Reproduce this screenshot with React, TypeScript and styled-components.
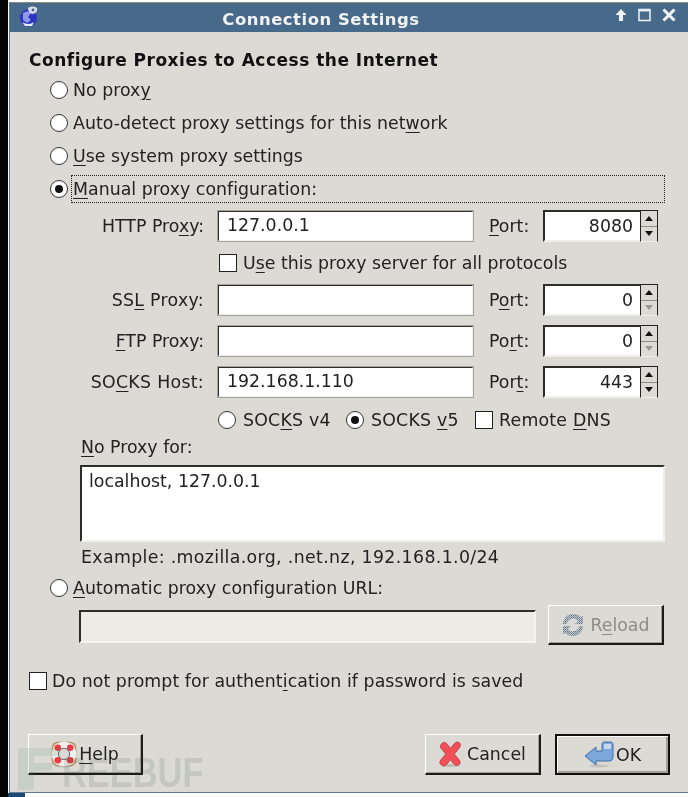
import React from "react";
import styled, { createGlobalStyle } from "styled-components";

const Global = createGlobalStyle`
  html, body { margin: 0; padding: 0; background: #ffffff; }
  * { box-sizing: border-box; }
`;

const Desktop = styled.div`
  position: relative;
  width: 688px;
  height: 797px;
  overflow: hidden;
  background: #fff;
  padding: 2px 0 4px 9px;
  font-family: "DejaVu Sans", sans-serif;
  font-size: 17.35px;
  color: #222;
  filter: blur(0.35px);
  &::before {
    content: "";
    position: absolute;
    left: 0; top: 0; bottom: 0;
    width: 8px;
    background: #050505;
  }
  &::after {
    content: "";
    position: absolute;
    left: 8px; bottom: 0;
    width: 17px; height: 4px;
    background: #1d4a70;
  }
`;
const Dialog = styled.div`
  height: 100%;
  display: flex;
  flex-direction: column;
  background: #dbdad5;
  border-top: 1px solid #8d8a7e;
  border-left: 1px solid #5f7d98;
  border-bottom: 1px solid #5f7d98;
`;
const TitleBar = styled.div`
  position: relative;
  flex: none;
  height: 29px;
  background: #47698a;
  display: flex;
  align-items: center;
  justify-content: center;
  color: #f2f2f2;
  font-weight: 700;
  font-size: 16.4px;
  letter-spacing: 0.55px;
  padding: 3px 56px 0 0;
`;
const AppIcon = styled.svg`
  position: absolute;
  left: 9px;
  top: 2px;
`;
const WinControls = styled.div`
  position: absolute;
  right: 12px;
  top: 5px;
  display: flex;
  align-items: center;
  gap: 11px;
`;
const Content = styled.div`
  flex: 1;
  position: relative;
  padding: 12px 0 0 19px;
`;
const Heading = styled.div`
  height: 29px;
  line-height: 33px;
  font-weight: 700;
  font-size: 17px;
  letter-spacing: 0.5px;
  color: #111;
`;
const OptionRow = styled.div<{ $h?: number }>`
  height: ${(p) => p.$h ?? 33}px;
  display: flex;
  align-items: center;
  padding-left: 21px;
  gap: 5px;
  letter-spacing: 0.03px;
`;
const Radio = styled.span<{ $on?: boolean }>`
  flex: none;
  width: 18px;
  height: 18px;
  border-radius: 50%;
  background: #fff;
  border: 1.5px solid #333;
  display: flex;
  align-items: center;
  justify-content: center;
  &::after {
    content: "";
    width: 8px;
    height: 8px;
    border-radius: 50%;
    background: ${(p) => (p.$on ? "#111" : "transparent")};
  }
`;
const Check = styled.span`
  flex: none;
  width: 18px;
  height: 18px;
  background: #fff;
  border: 1.5px solid #222;
`;
const Focused = styled.span`
  flex: none;
  width: 594px;
  height: 28px;
  margin-left: -2px;
  padding-left: 1px;
  line-height: 26px;
  border: 1px dotted #222;
`;
const M = styled.span`
  text-decoration: underline;
  text-underline-offset: 3px;
  text-decoration-thickness: 1px;
`;
const ProxyRow = styled.div<{ $mt: number }>`
  display: grid;
  grid-template-columns: 188px 257px 69px 115px;
  height: 32px;
  margin-top: ${(p) => p.$mt}px;
  align-items: center;
`;
const FieldLabel = styled.label<{ $wide?: boolean }>`
  text-align: right;
  padding-right: 13px;
  letter-spacing: ${(p) => (p.$wide ? "0.3px" : "0")};
`;
const PortLabel = styled.label`
  padding-left: 15px;
`;
const TextField = styled.div`
  height: 32px;
  background: #fff;
  border-style: solid;
  border-width: 2px;
  border-color: #2d2c28 #efeeea #efeeea #2d2c28;
  outline: 1px solid #a5a39b;
  outline-offset: -1px;
  padding-left: 8px;
  line-height: 27px;
`;
const Spin = styled.div`
  position: relative;
  height: 32px;
  background: #fff;
  border-style: solid;
  border-width: 2px;
  border-color: #2d2c28 #efeeea #efeeea #2d2c28;
  text-align: right;
  padding-right: 23px;
  line-height: 28px;
`;
const SpinButtons = styled.div`
  position: absolute;
  top: -2px;
  right: -2px;
  bottom: -2px;
  width: 18px;
  display: flex;
  flex-direction: column;
  background: #dbdad5;
  border: 1px solid #222;
  border-bottom-color: #efeeea;
`;
const SpinCell = styled.div`
  flex: 1;
  display: flex;
  align-items: center;
  justify-content: center;
  & + & { border-top: 1px solid #8f8c84; }
`;
const Tri = styled.span<{ $down?: boolean; $off?: boolean }>`
  width: 0;
  height: 0;
  border-left: 4px solid transparent;
  border-right: 4px solid transparent;
  ${(p) => (p.$down ? "border-top" : "border-bottom")}: 5px solid ${(p) => (p.$off ? "#9a9890" : "#111")};
`;
const AllProtocols = styled.div`
  height: 42px;
  padding-left: 190px;
  display: flex;
  align-items: center;
  gap: 6px;
`;
const SocksRow = styled.div`
  height: 39px;
  padding: 4px 0 0 189px;
  display: flex;
  align-items: center;
  letter-spacing: 0.22px;
`;
const SocksItem = styled.span<{ $w: number; $gap: number }>`
  width: ${(p) => p.$w}px;
  display: flex;
  align-items: center;
  gap: ${(p) => p.$gap}px;
`;
const NoProxyLabel = styled.div`
  height: 20px;
  line-height: 20px;
  margin: 0 0 8px 52px;
`;
const TextArea = styled.div`
  width: 585px;
  height: 77px;
  margin-left: 51px;
  background: #fff;
  border-style: solid;
  border-width: 2px;
  border-color: #2d2c28 #efeeea #efeeea #2d2c28;
  padding: 4px 7px;
`;
const Example = styled.div`
  height: 30px;
  line-height: 30px;
  margin-left: 52px;
  letter-spacing: 0.35px;
`;
const UrlRow = styled.div`
  display: flex;
  align-items: flex-start;
  height: 40px;
  margin: 2px 0 0 50px;
`;
const UrlField = styled.div`
  width: 457px;
  height: 33px;
  margin: 5px 12px 0 0;
  background: #edebe6;
  border-style: solid;
  border-width: 2px;
  border-color: #2d2c28 #f4f3ef #f4f3ef #2d2c28;
`;
const Btn = styled.div<{ $w: number; $focus?: boolean; $off?: boolean; $gap?: number }>`
  flex: none;
  width: ${(p) => p.$w}px;
  height: ${(p) => (p.$off ? 40 : 41)}px;
  display: flex;
  align-items: center;
  justify-content: center;
  gap: ${(p) => p.$gap ?? 2}px;
  color: ${(p) => (p.$off ? "#8d8c87" : "#222")};
  background: #dbdad5;
  border-style: solid;
  border-width: ${(p) => (p.$focus ? "2px" : "1px 2px 2px 1px")};
  border-color: ${(p) => (p.$focus ? "#111" : "#fff #1a1a18 #1a1a18 #fff")};
  box-shadow: ${(p) =>
    p.$focus
      ? "inset 1px 1px 0 #fff, inset -2px -2px 0 #a3a095"
      : "inset -1px -1px 0 #a3a095"};
`;
const AuthRow = styled.div`
  height: 30px;
  margin-top: 21px;
  display: flex;
  align-items: center;
  gap: 5px;
  letter-spacing: 0.06px;
`;
const Footer = styled.div`
  display: flex;
  margin: 38px 0 0 -1px;
  width: 642px;
  gap: 14px;
`;
const Spacer = styled.div`
  flex: 1;
`;
const Watermark = styled.div`
  position: absolute;
  left: 18px;
  top: 748px;
  display: flex;
  align-items: flex-end;
  pointer-events: none;
  opacity: 0.13;
`;
const WatermarkText = styled.span`
  font-family: "Liberation Sans", sans-serif;
  font-weight: 700;
  font-size: 43px;
  line-height: 36px;
  color: #33473a;
  margin-left: 2px;
  transform: scaleX(0.8);
  transform-origin: left bottom;
`;

const LogoIcon = () => (
  <AppIcon width="20" height="24" viewBox="0 0 20 24">
    <circle cx="9.5" cy="13" r="8.5" fill="#2c34c8" />
    <path d="M4 8c3-2 6-2 8 0l-3 4 3 3-4 3-4-3z" fill="#8f9ae8" />
    <path d="M3 17c3 2 8 3 12 0l-2 4H6z" fill="#e8e8f8" />
    <path d="M9 3c2-2 7-2 9 0 1 3-1 5-4 6-3 0-5-3-5-6z" fill="#d6d9e6" />
    <circle cx="14" cy="5" r="1.4" fill="#47698a" />
  </AppIcon>
);
const UpIcon = () => (
  <svg width="12" height="14" viewBox="0 0 12 14">
    <path d="M6 1 11.5 7H8v6H4V7H.5z" fill="#f4f4f4" />
  </svg>
);
const MaxIcon = () => (
  <svg width="13" height="14" viewBox="0 0 13 14">
    <rect x="1" y="1.5" width="11" height="11" fill="none" stroke="#e8ecf0" strokeWidth="1.6" />
    <rect x="1" y="1" width="11" height="2.5" fill="#e8ecf0" />
  </svg>
);
const CloseIcon = () => (
  <svg width="14" height="14" viewBox="0 0 14 14">
    <path d="M1.5 1.5 12.5 12.5M12.5 1.5 1.5 12.5" stroke="#f4f4f4" strokeWidth="3" />
  </svg>
);
const ReloadIcon = () => (
  <svg width="24" height="24" viewBox="0 0 24 24">
    <defs>
      <pattern id="dots" width="2" height="2" patternUnits="userSpaceOnUse">
        <rect width="2" height="2" fill="#c9cacb" />
        <rect width="1" height="1" fill="#5d7488" />
        <rect x="1" y="1" width="1" height="1" fill="#7d8f9f" />
      </pattern>
    </defs>
    <path d="M2 11C2 5 7 1 12 1c3 0 6 1 8 3l2-1v8h-8l3-3c-2-2-4-3-6-2-3 0-5 3-5 5zM22 13c0 6-5 10-10 10-3 0-6-1-8-3l-2 1v-8h8l-3 3c2 2 4 3 6 2 3 0 5-3 5-5z" fill="url(#dots)" />
  </svg>
);
const HelpIcon = () => (
  <svg width="26" height="27" viewBox="0 0 26 27">
    <ellipse cx="13" cy="25" rx="9" ry="1.5" fill="#bdbbb4" />
    <rect x="1.5" y="1.5" width="23" height="23" rx="5" fill="none" stroke="#b2945c" strokeWidth="1.6" />
    <circle cx="13" cy="13" r="9" fill="none" stroke="#eeeeee" strokeWidth="6.5" />
    <g fill="#ee3b42">
      <circle cx="6.8" cy="6.8" r="3.3" />
      <circle cx="19.2" cy="6.8" r="3.3" />
      <circle cx="6.8" cy="19.2" r="3.3" />
      <circle cx="19.2" cy="19.2" r="3.3" />
    </g>
    <circle cx="13" cy="13" r="5.6" fill="#dbdad5" stroke="#666" strokeWidth="1" />
  </svg>
);
const CancelIcon = () => (
  <svg width="23" height="27" viewBox="0 0 24 27">
    <ellipse cx="12" cy="25" rx="10" ry="1.5" fill="#bdbbb4" />
    <path d="M3 2c2-2 4-1 5 0l4 5 4-5c2-2 4-2 6 0 1 2 0 3-1 5l-5 6 5 6c2 3 1 4 0 5-2 2-4 1-5 0l-4-5-4 5c-2 2-4 2-6 0-2-2-1-3 0-5l5-6-5-6C1 5 1 4 3 2z" fill="#ef5058" stroke="#c43a42" strokeWidth="0.8" />
  </svg>
);
const OkIcon = () => (
  <svg width="30" height="27" viewBox="0 0 30 27">
    <ellipse cx="15" cy="25" rx="10" ry="1.5" fill="#c3c1ba" />
    <path d="M1 15 12 6v4h6V3c0-1 1-2 2-2h7c1 0 2 1 2 2v13c0 2-1 4-4 4H12v4z" fill="#7ba7dc" stroke="#3f6ea6" strokeWidth="1" />
    <path d="M20 3h7v5h-7z" fill="#c4d8f0" />
  </svg>
);
const FreeLogo = () => (
  <svg width="42" height="42" viewBox="0 0 42 42">
    <path d="M0 0h42v8H16v7h18v8H16v19H0z" fill="#4d8b67" />
  </svg>
);

const Port = ({ label, value, down }: { label: React.ReactNode; value: string; down?: boolean }) => (
  <>
    <PortLabel>{label}</PortLabel>
    <Spin>
      {value}
      <SpinButtons>
        <SpinCell><Tri /></SpinCell>
        <SpinCell><Tri $down $off={!down} /></SpinCell>
      </SpinButtons>
    </Spin>
  </>
);

export default function App() {
  return (
    <>
      <Global />
      <Desktop>
        <Dialog>
          <TitleBar>
            <LogoIcon />
            Connection Settings
            <WinControls>
              <UpIcon />
              <MaxIcon />
              <CloseIcon />
            </WinControls>
          </TitleBar>
          <Content>
            <Heading>Configure Proxies to Access the Internet</Heading>
            <OptionRow><Radio /><span>No prox<M>y</M></span></OptionRow>
            <OptionRow><Radio /><span>Auto-detect proxy settings for this net<M>w</M>ork</span></OptionRow>
            <OptionRow><Radio /><span><M>U</M>se system proxy settings</span></OptionRow>
            <OptionRow><Radio $on /><Focused><M>M</M>anual proxy configuration:</Focused></OptionRow>

            <ProxyRow $mt={5}>
              <FieldLabel>HTTP Pro<M>x</M>y:</FieldLabel>
              <TextField>127.0.0.1</TextField>
              <Port label={<><M>P</M>ort:</>} value="8080" down />
            </ProxyRow>
            <AllProtocols><Check /><span>U<M>s</M>e this proxy server for all protocols</span></AllProtocols>
            <ProxyRow $mt={0}>
              <FieldLabel $wide>SS<M>L</M> Proxy:</FieldLabel>
              <TextField />
              <Port label={<>P<M>o</M>rt:</>} value="0" />
            </ProxyRow>
            <ProxyRow $mt={9}>
              <FieldLabel><M>F</M>TP Proxy:</FieldLabel>
              <TextField />
              <Port label={<>Po<M>r</M>t:</>} value="0" />
            </ProxyRow>
            <ProxyRow $mt={9}>
              <FieldLabel $wide>SO<M>C</M>KS Host:</FieldLabel>
              <TextField>192.168.1.110</TextField>
              <Port label={<>Por<M>t</M>:</>} value="443" down />
            </ProxyRow>
            <SocksRow>
              <SocksItem $w={128} $gap={7}><Radio /><span>SOC<M>K</M>S v4</span></SocksItem>
              <SocksItem $w={129} $gap={7}><Radio $on /><span>SOCKS <M>v</M>5</span></SocksItem>
              <SocksItem $w={140} $gap={6}><Check /><span>Remote <M>D</M>NS</span></SocksItem>
            </SocksRow>
            <NoProxyLabel><M>N</M>o Proxy for:</NoProxyLabel>
            <TextArea>localhost, 127.0.0.1</TextArea>
            <Example>Example: .mozilla.org, .net.nz, 192.168.1.0/24</Example>
            <OptionRow $h={31}><Radio /><span><M>A</M>utomatic proxy configuration URL:</span></OptionRow>
            <UrlRow>
              <UrlField />
              <Btn $w={116} $off $gap={5}><ReloadIcon /><span>R<M>e</M>load</span></Btn>
            </UrlRow>
            <AuthRow><Check /><span>Do not prompt for authent<M>i</M>cation if password is saved</span></AuthRow>
            <Footer>
              <Btn $w={115}><HelpIcon /><span><M>H</M>elp</span></Btn>
              <Spacer />
              <Btn $w={116} $gap={5}><CancelIcon /><span>Cancel</span></Btn>
              <Btn $w={115} $focus><OkIcon /><span>OK</span></Btn>
            </Footer>
          </Content>
        </Dialog>
        <Watermark>
          <FreeLogo />
          <WatermarkText>REEBUF</WatermarkText>
        </Watermark>
      </Desktop>
    </>
  );
}
